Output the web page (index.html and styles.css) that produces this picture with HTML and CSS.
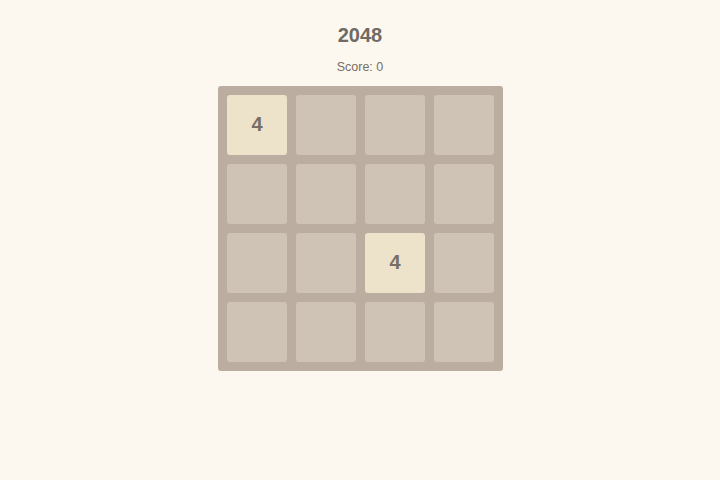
FILE: index.html
```html
<!DOCTYPE html>
<html>
<head>
<meta charset="utf-8">
<link rel="stylesheet" href="styles.css">
</head>
<body>
<div class="app">
  <h1 class="title">2048</h1>
  <div class="score">Score: 0</div>
  <div class="board">
    <div class="cell tile-4">4</div>
    <div class="cell"></div>
    <div class="cell"></div>
    <div class="cell"></div>
    <div class="cell"></div>
    <div class="cell"></div>
    <div class="cell"></div>
    <div class="cell"></div>
    <div class="cell"></div>
    <div class="cell"></div>
    <div class="cell tile-4">4</div>
    <div class="cell"></div>
    <div class="cell"></div>
    <div class="cell"></div>
    <div class="cell"></div>
    <div class="cell"></div>
  </div>
</div>
</body>
</html>
```
FILE: styles.css
```css
html, body {
  margin: 0;
  padding: 0;
  background: #fcf8ef;
  font-family: "Liberation Sans", Arial, sans-serif;
  color: #776e65;
}
.app {
  display: flex;
  flex-direction: column;
  align-items: center;
  padding-top: 23px;
}
.title {
  margin: 0;
  font-size: 20px;
  line-height: 24px;
  font-weight: bold;
  color: #6f6a64;
}
.score {
  margin-top: 13px;
  font-size: 12.5px;
  line-height: 14px;
}
.board {
  margin-top: 12px;
  margin-left: 1px;
  display: grid;
  grid-template-columns: repeat(4, 60px);
  grid-template-rows: repeat(4, 60px);
  gap: 9px;
  padding: 9px;
  background: #bbada0;
  border-radius: 3px;
}
.cell {
  background: #cfc3b6;
  border-radius: 3px;
  display: flex;
  align-items: center;
  justify-content: center;
  padding-bottom: 2px;
  box-sizing: border-box;
  font-size: 20px;
  font-weight: bold;
  color: #776e65;
}
.tile-4 {
  background: #ede2ca;
}
```
